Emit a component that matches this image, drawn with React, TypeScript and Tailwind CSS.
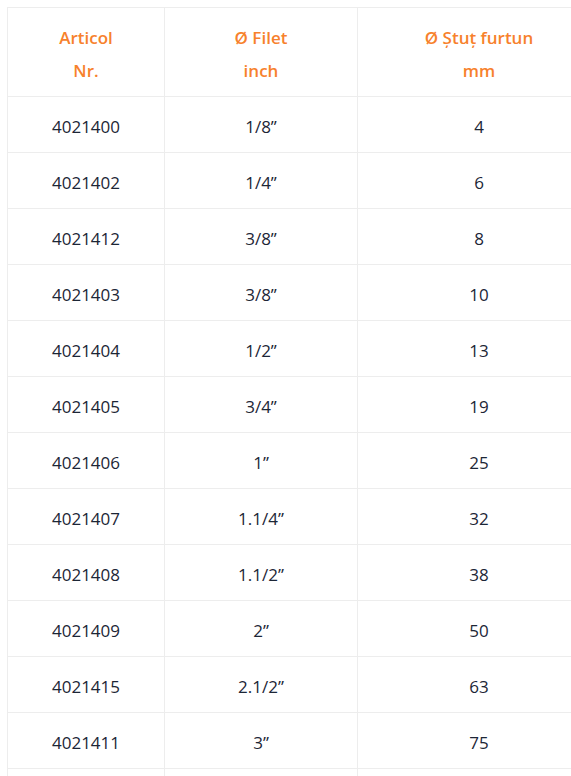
import React from "react";

const rows: [string, string, string][] = [
  ["4021400", "1/8”", "4"],
  ["4021402", "1/4”", "6"],
  ["4021412", "3/8”", "8"],
  ["4021403", "3/8”", "10"],
  ["4021404", "1/2”", "13"],
  ["4021405", "3/4”", "19"],
  ["4021406", "1”", "25"],
  ["4021407", "1.1/4”", "32"],
  ["4021408", "1.1/2”", "38"],
  ["4021409", "2”", "50"],
  ["4021415", "2.1/2”", "63"],
  ["4021411", "3”", "75"],
  ["", "", ""],
];

const App = () => {
  return (
    <div className="w-[571px] h-[776px] overflow-hidden bg-white pt-[7px] pl-[7px]" style={{ fontFamily: '"Open Sans", sans-serif' }}>
      <table className="border-collapse table-fixed w-[593px] text-[17px] text-[#1c2636]">
        <colgroup>
          <col className="w-[157px]" />
          <col className="w-[193px]" />
          <col className="w-[243px]" />
        </colgroup>
        <thead>
          <tr className="h-[89px]">
            {[
              ["Articol", "Nr."],
              ["Ø Filet", "inch"],
              ["Ø Ștuț furtun", "mm"],
            ].map(([a, b], i) => (
              <th key={i} className="border border-[#ededed] text-center font-semibold text-[#f7812c] leading-[33px] pt-[4px] align-middle">
                {a}
                <br />
                {b}
              </th>
            ))}
          </tr>
        </thead>
        <tbody>
          {rows.map((r, idx) => (
            <tr key={idx} className="h-[56px]">
              {r.map((c, i) => (
                <td key={i} className="border border-[#ededed] text-center align-middle pt-[4px]">
                  {c}
                </td>
              ))}
            </tr>
          ))}
        </tbody>
      </table>
    </div>
  );
};

export default App;
